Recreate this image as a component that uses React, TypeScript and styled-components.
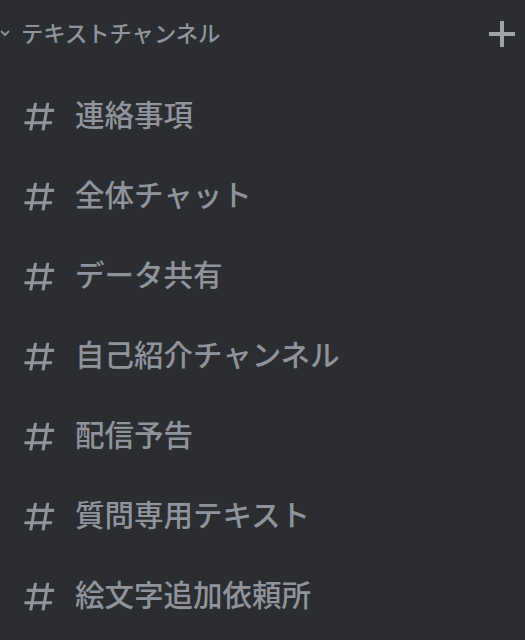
import React from "react";
import styled, { createGlobalStyle } from "styled-components";

const Global = createGlobalStyle`
  html, body { margin: 0; padding: 0; background: #2b2d31; }
  body { font-family: "Noto Sans CJK JP", "Noto Sans", sans-serif; }
`;

const Panel = styled.div`
  width: 525px;
  height: 640px;
  background: #2b2d31;
  overflow: hidden;
`;

const Header = styled.div`
  height: 68px;
  display: flex;
  align-items: center;
  padding: 0 9px 0 0;
  color: #90949a;
`;

const Chevron = styled.svg`
  width: 12px;
  height: 12px;
  margin-left: -1px;
  margin-right: 10px;
  margin-bottom: 2px;
  flex: none;
`;

const HeaderTitle = styled.span`
  flex: 1;
  font-size: 22.3px;
  font-weight: 500;
  line-height: 1;
  padding-bottom: 4px;
`;

const AddButton = styled.svg`
  width: 28px;
  height: 28px;
  flex: none;
`;

const List = styled.div`
  display: flex;
  flex-direction: column;
  padding-top: 9px;
`;

const Row = styled.div`
  height: 80px;
  display: flex;
  align-items: center;
  padding-left: 21px;
  gap: 17px;
  color: #90949a;
`;

const Hash = styled.svg`
  width: 37px;
  height: 37px;
  flex: none;
  margin-bottom: 1px;
`;

const Name = styled.span`
  font-size: 29.5px;
  font-weight: 500;
  line-height: 1;
  padding-bottom: 6px;
`;

const channels = [
  "連絡事項",
  "全体チャット",
  "データ共有",
  "自己紹介チャンネル",
  "配信予告",
  "質問専用テキスト",
  "絵文字追加依頼所",
];

const HASH =
  "M5.88657 21C5.57547 21 5.3399 20.7189 5.39427 20.4126L6.00001 17H2.59511C2.28449 17 2.04905 16.7198 2.10259 16.4138L2.27759 15.4138C2.31946 15.1746 2.52722 15 2.77011 15H6.35001L7.41001 9H4.00511C3.69449 9 3.45905 8.71977 3.51259 8.41381L3.68759 7.41381C3.72946 7.17456 3.93722 7 4.18011 7H7.76001L8.39677 3.41262C8.43914 3.17391 8.64664 3 8.88907 3H9.87344C10.1845 3 10.4201 3.28107 10.3657 3.58738L9.76001 7H15.76L16.3968 3.41262C16.4391 3.17391 16.6466 3 16.8891 3H17.8734C18.1845 3 18.4201 3.28107 18.3657 3.58738L17.76 7H21.1649C21.4755 7 21.711 7.28023 21.6574 7.58619L21.4824 8.58619C21.4406 8.82544 21.2328 9 20.9899 9H17.41L16.35 15H19.7549C20.0655 15 20.301 15.2802 20.2474 15.5862L20.0724 16.5862C20.0306 16.8254 19.8228 17 19.5799 17H16L15.3632 20.5874C15.3209 20.8261 15.1134 21 14.8709 21H13.8866C13.5755 21 13.3399 20.7189 13.3943 20.4126L14 17H8.00001L7.36325 20.5874C7.32088 20.8261 7.11337 21 6.87094 21H5.88657ZM9.41045 9L8.35045 15H14.3504L15.4104 9H9.41045Z";

export default function App() {
  return (
    <Panel>
      <Global />
      <Header>
        <Chevron viewBox="0 0 12 12" fill="none">
          <path d="M2.5 4.5L6 8L9.5 4.5" stroke="#90949a" strokeWidth="1.8" strokeLinecap="round" strokeLinejoin="round" />
        </Chevron>
        <HeaderTitle>テキストチャンネル</HeaderTitle>
        <AddButton viewBox="0 0 28 28">
          <path d="M14 1V27M1 14H27" stroke="#a0a4a9" strokeWidth="4" />
        </AddButton>
      </Header>
      <List>
        {channels.map((c) => (
          <Row key={c}>
            <Hash viewBox="0 0 24 24">
              <path fill="#90949a" fillRule="evenodd" d={HASH} />
            </Hash>
            <Name>{c}</Name>
          </Row>
        ))}
      </List>
    </Panel>
  );
}
